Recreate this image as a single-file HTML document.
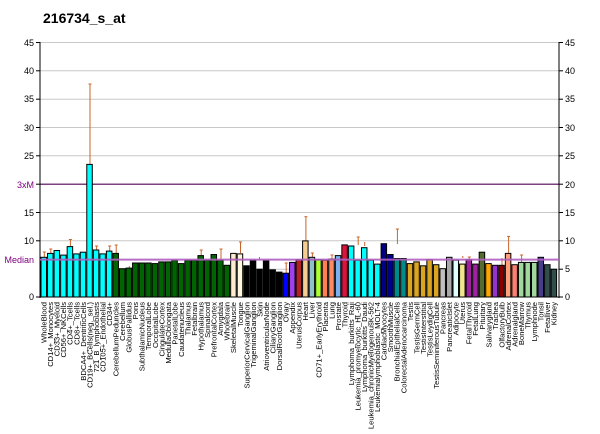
<!DOCTYPE html>
<html><head><meta charset="utf-8"><style>
html,body{margin:0;padding:0;background:#fff;width:600px;height:434px;overflow:hidden}
svg{display:block;font-family:"Liberation Sans",sans-serif}
</style></head><body>
<svg width="600" height="434" viewBox="0 0 600 434" xmlns="http://www.w3.org/2000/svg">
<text x="43" y="23" font-size="14" font-weight="bold" fill="#000">216734_s_at</text>
<g stroke="#c8c8c8" stroke-width="1">
<line x1="40" y1="42.5" x2="559" y2="42.5"/><line x1="40" y1="70.8" x2="559" y2="70.8"/><line x1="40" y1="99.2" x2="559" y2="99.2"/><line x1="40" y1="127.5" x2="559" y2="127.5"/><line x1="40" y1="155.8" x2="559" y2="155.8"/><line x1="40" y1="212.5" x2="559" y2="212.5"/><line x1="40" y1="240.8" x2="559" y2="240.8"/><line x1="40" y1="269.2" x2="559" y2="269.2"/>
</g>
<line x1="40" y1="184.2" x2="559" y2="184.2" stroke="#500050" stroke-width="1.2"/>
<g font-size="9" fill="#000" text-anchor="end">
<text x="34" y="46">45</text><text x="34" y="74">40</text><text x="34" y="102">35</text><text x="34" y="131">30</text><text x="34" y="159">25</text><text x="34" y="216">15</text><text x="34" y="244">10</text><text x="34" y="300">0</text>
</g>
<text x="34" y="188" font-size="9" fill="#800080" text-anchor="end">3xM</text>
<text x="34" y="263" font-size="9" fill="#800080" text-anchor="end">Median</text>
<g font-size="9" fill="#000">
<text x="565" y="46">45</text><text x="565" y="74">40</text><text x="565" y="102">35</text><text x="565" y="131">30</text><text x="565" y="159">25</text><text x="565" y="188">20</text><text x="565" y="216">15</text><text x="565" y="244">10</text><text x="565" y="272">5</text><text x="565" y="300">0</text>
</g>
<g stroke="#000">
<line x1="40" y1="42" x2="40" y2="298"/><line x1="559" y1="42" x2="559" y2="298"/>
<line x1="36" y1="42.5" x2="40" y2="42.5"/><line x1="36" y1="70.8" x2="40" y2="70.8"/><line x1="36" y1="99.2" x2="40" y2="99.2"/><line x1="36" y1="127.5" x2="40" y2="127.5"/><line x1="36" y1="155.8" x2="40" y2="155.8"/><line x1="36" y1="184.2" x2="40" y2="184.2"/><line x1="36" y1="212.5" x2="40" y2="212.5"/><line x1="36" y1="240.8" x2="40" y2="240.8"/><line x1="36" y1="297" x2="40" y2="297"/>
<line x1="559" y1="42.5" x2="563" y2="42.5"/><line x1="559" y1="70.8" x2="563" y2="70.8"/><line x1="559" y1="99.2" x2="563" y2="99.2"/><line x1="559" y1="127.5" x2="563" y2="127.5"/><line x1="559" y1="155.8" x2="563" y2="155.8"/><line x1="559" y1="184.2" x2="563" y2="184.2"/><line x1="559" y1="212.5" x2="563" y2="212.5"/><line x1="559" y1="240.8" x2="563" y2="240.8"/><line x1="559" y1="269.2" x2="563" y2="269.2"/><line x1="559" y1="297" x2="563" y2="297"/>
</g>
<!-- error bars -->
<g stroke="#c8642a" stroke-width="1">
<line x1="44.3" y1="257" x2="44.3" y2="252"/><line x1="42.8" y1="252" x2="45.8" y2="252"/>
<line x1="50.8" y1="253" x2="50.8" y2="249"/><line x1="49.3" y1="249" x2="52.3" y2="249"/>
<line x1="70.4" y1="246" x2="70.4" y2="239.5"/><line x1="68.9" y1="239.5" x2="71.9" y2="239.5"/>
<line x1="90" y1="164" x2="90" y2="84"/><line x1="88.5" y1="84" x2="91.5" y2="84"/>
<line x1="96.6" y1="250" x2="96.6" y2="246"/><line x1="95.1" y1="246" x2="98.1" y2="246"/>
<line x1="109.7" y1="251" x2="109.7" y2="246"/><line x1="108.2" y1="246" x2="111.2" y2="246"/>
<line x1="116.2" y1="253" x2="116.2" y2="245"/><line x1="114.7" y1="245" x2="117.7" y2="245"/>
<line x1="129.3" y1="268" x2="129.3" y2="266"/>
<line x1="201.2" y1="255" x2="201.2" y2="250"/><line x1="199.7" y1="250" x2="202.7" y2="250"/>
<line x1="221" y1="260" x2="221" y2="249"/><line x1="219.5" y1="249" x2="222.5" y2="249"/>
<line x1="240.5" y1="253" x2="240.5" y2="242"/><line x1="239" y1="242" x2="242" y2="242"/>
<line x1="259.5" y1="260" x2="259.5" y2="257"/>
<line x1="286.2" y1="273" x2="286.2" y2="263"/><line x1="284.7" y1="263" x2="287.7" y2="263"/>
<line x1="305.9" y1="241" x2="305.9" y2="216.7"/><line x1="304.4" y1="216.7" x2="307.4" y2="216.7"/>
<line x1="312.4" y1="257" x2="312.4" y2="253"/><line x1="310.9" y1="253" x2="313.9" y2="253"/>
<line x1="332" y1="259" x2="332" y2="255"/><line x1="330.5" y1="255" x2="333.5" y2="255"/>
<line x1="358.2" y1="245" x2="358.2" y2="237"/><line x1="356.7" y1="237" x2="359.7" y2="237"/>
<line x1="364.7" y1="246" x2="364.7" y2="242"/>
<line x1="384.4" y1="248" x2="384.4" y2="244"/>
<line x1="397.4" y1="244" x2="397.4" y2="229"/><line x1="395.9" y1="229" x2="398.9" y2="229"/>
<line x1="449.7" y1="269" x2="449.7" y2="262"/><line x1="448.2" y1="262" x2="451.2" y2="262"/>
<line x1="462.8" y1="258" x2="462.8" y2="256"/>
<line x1="469.3" y1="264" x2="469.3" y2="257"/><line x1="467.8" y1="257" x2="470.8" y2="257"/>
<line x1="502" y1="265" x2="502" y2="258"/>
<line x1="508.6" y1="253" x2="508.6" y2="236.4"/><line x1="507.1" y1="236.4" x2="510.1" y2="236.4"/>
<line x1="521.6" y1="262" x2="521.6" y2="255"/><line x1="520.1" y1="255" x2="523.1" y2="255"/>
</g>
<!-- bars -->
<g stroke="#000" stroke-width="1">
<rect x="41.0" y="257.3" width="5.5" height="39.7" fill="#00ffff"/>
<rect x="47.54" y="253.4" width="5.5" height="43.6" fill="#00ffff"/>
<rect x="54.08" y="250.5" width="5.5" height="46.5" fill="#00ffff"/>
<rect x="60.62" y="255.1" width="5.5" height="41.9" fill="#00ffff"/>
<rect x="67.16" y="246.6" width="5.5" height="50.4" fill="#00ffff"/>
<rect x="73.70" y="253.9" width="5.5" height="43.1" fill="#00ffff"/>
<rect x="80.24" y="252.2" width="5.5" height="44.8" fill="#00ffff"/>
<rect x="86.78" y="164.4" width="5.5" height="132.6" fill="#00ffff"/>
<rect x="93.32" y="250.0" width="5.5" height="47.0" fill="#00ffff"/>
<rect x="99.86" y="253.9" width="5.5" height="43.1" fill="#00ffff"/>
<rect x="106.40" y="251.1" width="5.5" height="45.9" fill="#00ffff"/>
<rect x="112.94" y="253.4" width="5.5" height="43.6" fill="#006400"/>
<rect x="119.48" y="268.7" width="5.5" height="28.3" fill="#006400"/>
<rect x="126.02" y="268.1" width="5.5" height="28.9" fill="#006400"/>
<rect x="132.56" y="263.0" width="5.5" height="34.0" fill="#006400"/>
<rect x="139.10" y="263.0" width="5.5" height="34.0" fill="#006400"/>
<rect x="145.64" y="263.0" width="5.5" height="34.0" fill="#006400"/>
<rect x="152.18" y="263.6" width="5.5" height="33.4" fill="#006400"/>
<rect x="158.72" y="261.9" width="5.5" height="35.1" fill="#006400"/>
<rect x="165.26" y="261.9" width="5.5" height="35.1" fill="#006400"/>
<rect x="171.80" y="260.2" width="5.5" height="36.8" fill="#006400"/>
<rect x="178.34" y="263.6" width="5.5" height="33.4" fill="#006400"/>
<rect x="184.88" y="260.2" width="5.5" height="36.8" fill="#006400"/>
<rect x="191.42" y="260.2" width="5.5" height="36.8" fill="#006400"/>
<rect x="197.96" y="255.6" width="5.5" height="41.4" fill="#006400"/>
<rect x="204.50" y="260.2" width="5.5" height="36.8" fill="#006400"/>
<rect x="211.04" y="254.5" width="5.5" height="42.5" fill="#006400"/>
<rect x="217.58" y="260.2" width="5.5" height="36.8" fill="#006400"/>
<rect x="224.12" y="265.3" width="5.5" height="31.7" fill="#006400"/>
<rect x="230.66" y="253.4" width="5.5" height="43.6" fill="#ffebcd"/>
<rect x="237.20" y="253.9" width="5.5" height="43.1" fill="#fff8dc"/>
<rect x="243.74" y="265.8" width="5.5" height="31.2" fill="#000"/>
<rect x="250.28" y="260.2" width="5.5" height="36.8" fill="#000"/>
<rect x="256.82" y="269.2" width="5.5" height="27.8" fill="#000"/>
<rect x="263.36" y="260.7" width="5.5" height="36.3" fill="#000"/>
<rect x="269.90" y="269.8" width="5.5" height="27.2" fill="#000"/>
<rect x="276.44" y="272.1" width="5.5" height="24.9" fill="#000"/>
<rect x="282.98" y="273.2" width="5.5" height="23.8" fill="#0000ff"/>
<rect x="289.52" y="262.4" width="5.5" height="34.6" fill="#a040f0"/>
<rect x="296.06" y="259.6" width="5.5" height="37.4" fill="#b22222"/>
<rect x="302.60" y="240.9" width="5.5" height="56.1" fill="#f5cd90"/>
<rect x="309.14" y="257.3" width="5.5" height="39.7" fill="#90c0c8"/>
<rect x="315.68" y="259.6" width="5.5" height="37.4" fill="#adff2f"/>
<rect x="322.22" y="260.2" width="5.5" height="36.8" fill="#ff7f50"/>
<rect x="328.76" y="259.0" width="5.5" height="38.0" fill="#ff8c60"/>
<rect x="335.30" y="255.6" width="5.5" height="41.4" fill="#7ab0f0"/>
<rect x="341.84" y="244.9" width="5.5" height="52.1" fill="#dc143c"/>
<rect x="348.38" y="246.0" width="5.5" height="51.0" fill="#00ffff"/>
<rect x="354.92" y="260.2" width="5.5" height="36.8" fill="#00ffff"/>
<rect x="361.46" y="247.7" width="5.5" height="49.3" fill="#00ffff"/>
<rect x="368.00" y="260.2" width="5.5" height="36.8" fill="#00ffff"/>
<rect x="374.54" y="264.1" width="5.5" height="32.9" fill="#00ffff"/>
<rect x="381.08" y="243.7" width="5.5" height="53.3" fill="#000080"/>
<rect x="387.62" y="254.5" width="5.5" height="42.5" fill="#00008b"/>
<rect x="394.16" y="258.5" width="5.5" height="38.5" fill="#008b8b"/>
<rect x="400.70" y="258.5" width="5.5" height="38.5" fill="#008b8b"/>
<rect x="407.24" y="263.6" width="5.5" height="33.4" fill="#daa520"/>
<rect x="413.78" y="261.9" width="5.5" height="35.1" fill="#daa520"/>
<rect x="420.32" y="265.8" width="5.5" height="31.2" fill="#daa520"/>
<rect x="426.86" y="259.6" width="5.5" height="37.4" fill="#daa520"/>
<rect x="433.40" y="264.7" width="5.5" height="32.3" fill="#daa520"/>
<rect x="439.94" y="268.7" width="5.5" height="28.3" fill="#c0c0c0"/>
<rect x="446.48" y="257.3" width="5.5" height="39.7" fill="#a9a9a9"/>
<rect x="453.02" y="260.2" width="5.5" height="36.8" fill="#e0ffff"/>
<rect x="459.56" y="264.1" width="5.5" height="32.9" fill="#f0e68c"/>
<rect x="466.10" y="259.6" width="5.5" height="37.4" fill="#a020a0"/>
<rect x="472.64" y="264.1" width="5.5" height="32.9" fill="#a020a0"/>
<rect x="479.18" y="252.2" width="5.5" height="44.8" fill="#556b2f"/>
<rect x="485.72" y="263.6" width="5.5" height="33.4" fill="#ffa500"/>
<rect x="492.26" y="265.3" width="5.5" height="31.7" fill="#9932cc"/>
<rect x="498.80" y="265.3" width="5.5" height="31.7" fill="#8b0000"/>
<rect x="505.34" y="253.4" width="5.5" height="43.6" fill="#ffa07a"/>
<rect x="511.88" y="264.7" width="5.5" height="32.3" fill="#fa8072"/>
<rect x="518.42" y="262.4" width="5.5" height="34.6" fill="#a0d8a0"/>
<rect x="524.96" y="262.4" width="5.5" height="34.6" fill="#a0d8a0"/>
<rect x="531.50" y="262.4" width="5.5" height="34.6" fill="#a0d8a0"/>
<rect x="538.04" y="257.3" width="5.5" height="39.7" fill="#483d8b"/>
<rect x="544.58" y="264.7" width="5.5" height="32.3" fill="#2f4f4f"/>
<rect x="551.12" y="269.2" width="5.5" height="27.8" fill="#2f4f4f"/>
</g>
<line x1="40" y1="259.6" x2="559" y2="259.6" stroke="#b060c0" stroke-width="2" opacity="0.9"/>
<line x1="40" y1="297" x2="559" y2="297" stroke="#000"/>
<g font-size="7.6" fill="#000" text-anchor="end" font-family="Liberation Sans, sans-serif">
<text transform="translate(46.6,302) rotate(-90)">WholeBlood</text>
<text transform="translate(53.1,302) rotate(-90)">CD14+_Monocytes</text>
<text transform="translate(59.7,302) rotate(-90)">CD33+_Myeloid</text>
<text transform="translate(66.2,302) rotate(-90)">CD56+_NKCells</text>
<text transform="translate(72.7,302) rotate(-90)">CD4+_Tcells</text>
<text transform="translate(79.3,302) rotate(-90)">CD8+_Tcells</text>
<text transform="translate(85.8,302) rotate(-90)">BDCA4+_DentriticCells</text>
<text transform="translate(92.4,302) rotate(-90)">CD19+_BCells(neg._sel.)</text>
<text transform="translate(98.9,302) rotate(-90)">721_B_lymphoblasts</text>
<text transform="translate(105.4,302) rotate(-90)">CD105+_Endothelial</text>
<text transform="translate(112.0,302) rotate(-90)">CD34+</text>
<text transform="translate(118.5,302) rotate(-90)">CerebellumPeduncles</text>
<text transform="translate(125.1,302) rotate(-90)">Cerebellum</text>
<text transform="translate(131.6,302) rotate(-90)">GlobusPallidus</text>
<text transform="translate(138.1,302) rotate(-90)">Pons</text>
<text transform="translate(144.7,302) rotate(-90)">SubthalamicNucleus</text>
<text transform="translate(151.2,302) rotate(-90)">TemporalLobe</text>
<text transform="translate(157.8,302) rotate(-90)">OccipitalLobe</text>
<text transform="translate(164.3,302) rotate(-90)">CingulateCortex</text>
<text transform="translate(170.8,302) rotate(-90)">MedullaOblongata</text>
<text transform="translate(177.4,302) rotate(-90)">ParietalLobe</text>
<text transform="translate(183.9,302) rotate(-90)">Caudatenucleus</text>
<text transform="translate(190.5,302) rotate(-90)">Thalamus</text>
<text transform="translate(197.0,302) rotate(-90)">Fetalbrain</text>
<text transform="translate(203.5,302) rotate(-90)">Hypothalamus</text>
<text transform="translate(210.1,302) rotate(-90)">Spinalcord</text>
<text transform="translate(216.6,302) rotate(-90)">PrefrontalCortex</text>
<text transform="translate(223.2,302) rotate(-90)">Amygdala</text>
<text transform="translate(229.7,302) rotate(-90)">Wholebrain</text>
<text transform="translate(236.2,302) rotate(-90)">SkeletalMuscle</text>
<text transform="translate(242.8,302) rotate(-90)">Tongue</text>
<text transform="translate(249.3,302) rotate(-90)">SuperiorCervicalGanglion</text>
<text transform="translate(255.9,302) rotate(-90)">TrigeminalGanglion</text>
<text transform="translate(262.4,302) rotate(-90)">Skin</text>
<text transform="translate(268.9,302) rotate(-90)">AtrioventricularNode</text>
<text transform="translate(275.5,302) rotate(-90)">CiliaryGanglion</text>
<text transform="translate(282.0,302) rotate(-90)">DorsalRootGanglion</text>
<text transform="translate(288.6,302) rotate(-90)">Ovary</text>
<text transform="translate(295.1,302) rotate(-90)">Appendix</text>
<text transform="translate(301.6,302) rotate(-90)">UterusCorpus</text>
<text transform="translate(308.2,302) rotate(-90)">Heart</text>
<text transform="translate(314.7,302) rotate(-90)">Liver</text>
<text transform="translate(321.3,302) rotate(-90)">CD71+_EarlyErythroid</text>
<text transform="translate(327.8,302) rotate(-90)">Placenta</text>
<text transform="translate(334.3,302) rotate(-90)">Lung</text>
<text transform="translate(340.9,302) rotate(-90)">Prostate</text>
<text transform="translate(347.4,302) rotate(-90)">Thyroid</text>
<text transform="translate(354.0,302) rotate(-90)">Lymphoma_burkitts_Raji</text>
<text transform="translate(360.5,302) rotate(-90)">Leukemia_promyelocytic_HL-60</text>
<text transform="translate(367.0,302) rotate(-90)">Lymphoma_burkitts_Daudi</text>
<text transform="translate(373.6,302) rotate(-90)">Leukemia_chronicMyelogenousK-562</text>
<text transform="translate(380.1,302) rotate(-90)">Leukemialymphoblastic_MOLT-4</text>
<text transform="translate(386.7,302) rotate(-90)">CardiacMyocytes</text>
<text transform="translate(393.2,302) rotate(-90)">SmoothMuscle</text>
<text transform="translate(399.7,302) rotate(-90)">BronchialEpithelialCells</text>
<text transform="translate(406.3,302) rotate(-90)">ColorectalAdenocarcinoma</text>
<text transform="translate(412.8,302) rotate(-90)">Testis</text>
<text transform="translate(419.4,302) rotate(-90)">TestisGermCell</text>
<text transform="translate(425.9,302) rotate(-90)">TestisInterstitial</text>
<text transform="translate(432.4,302) rotate(-90)">TestisLeydigCell</text>
<text transform="translate(439.0,302) rotate(-90)">TestisSeminiferousTubule</text>
<text transform="translate(445.5,302) rotate(-90)">Pancreas</text>
<text transform="translate(452.1,302) rotate(-90)">PancreaticIslet</text>
<text transform="translate(458.6,302) rotate(-90)">Adipocyte</text>
<text transform="translate(465.1,302) rotate(-90)">Uterus</text>
<text transform="translate(471.7,302) rotate(-90)">FetalThyroid</text>
<text transform="translate(478.2,302) rotate(-90)">FetalLung</text>
<text transform="translate(484.8,302) rotate(-90)">Pituitary</text>
<text transform="translate(491.3,302) rotate(-90)">Salivarygland</text>
<text transform="translate(497.8,302) rotate(-90)">Trachea</text>
<text transform="translate(504.4,302) rotate(-90)">OlfactoryBulb</text>
<text transform="translate(510.9,302) rotate(-90)">AdrenalCortex</text>
<text transform="translate(517.5,302) rotate(-90)">Adrenalgland</text>
<text transform="translate(524.0,302) rotate(-90)">BoneMarrow</text>
<text transform="translate(530.5,302) rotate(-90)">Thymus</text>
<text transform="translate(537.1,302) rotate(-90)">Lymphnode</text>
<text transform="translate(543.6,302) rotate(-90)">Tonsil</text>
<text transform="translate(550.2,302) rotate(-90)">Fetalliver</text>
<text transform="translate(556.7,302) rotate(-90)">Kidney</text>
</g>
</svg>
</body></html>
